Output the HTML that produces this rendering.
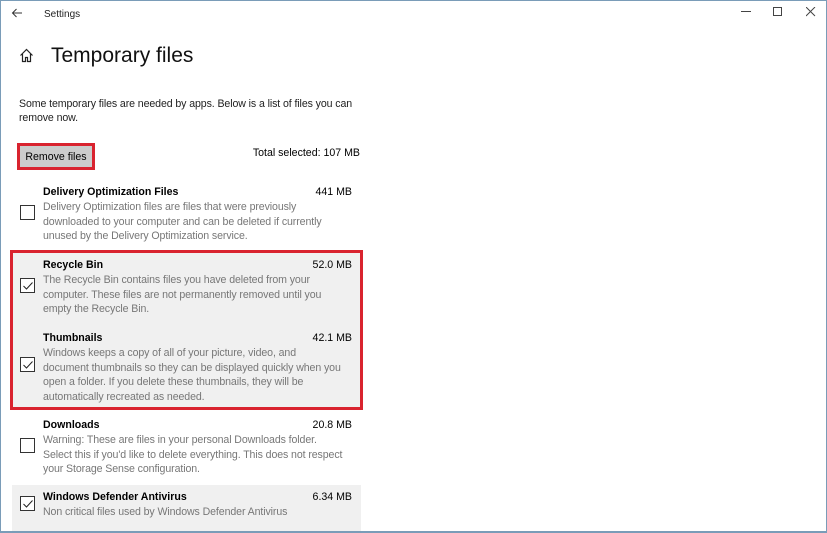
<!DOCTYPE html>
<html><head><meta charset="utf-8">
<style>
*{margin:0;padding:0;box-sizing:border-box}
html,body{width:827px;height:533px;overflow:hidden;background:#fff;font-family:"Liberation Sans",sans-serif;color:#000}
.frame{position:absolute;left:0;top:0;width:827px;height:533px;border:1px solid #7a9cb8;border-bottom-width:2px}
.a{position:absolute;white-space:nowrap}
.t{font-size:10.6px;font-weight:bold}
.s{font-size:10.6px;text-align:right}
.d{font-size:10.6px;color:#777;line-height:14.5px;white-space:nowrap;letter-spacing:-0.1px}
.cb{position:absolute;left:20px;width:15px;height:15px;border:1.5px solid #333;background:#fff}
.bg{position:absolute;background:#f0f0f0}
</style></head><body>
<div class="frame"></div>
<svg class="a" style="left:11px;top:8px" width="12" height="10" viewBox="0 0 12 10"><path d="M11 5H1.5M5.5 1L1.5 5l4 4" fill="none" stroke="#333" stroke-width="1"/></svg>
<div class="a" style="left:44px;top:9px;font-size:10px;color:#222">Settings</div>
<svg class="a" style="left:741px;top:11px" width="10" height="2"><path d="M0 .5H10" stroke="#444"/></svg>
<svg class="a" style="left:773px;top:7px" width="10" height="10"><rect x=".5" y=".5" width="8" height="8" fill="none" stroke="#444"/></svg>
<svg class="a" style="left:806px;top:7px" width="10" height="10"><path d="M0 0L9 9M9 0L0 9" stroke="#444"/></svg>
<svg class="a" style="left:19px;top:48px" width="15" height="15" viewBox="0 0 15 15"><path d="M1.5 7.5L7.5 1.5l6 6M3.5 6v7.5h3v-4h2v4h3V6" fill="none" stroke="#222" stroke-width="1.2"/></svg>
<div class="a" style="left:51px;top:44px;font-size:21px;color:#111">Temporary files</div>
<div class="a" style="left:19px;top:97px;font-size:10.6px;line-height:14px;color:#222;letter-spacing:-0.1px">Some temporary files are needed by apps. Below is a list of files you can<br>remove now.</div>
<div class="a" style="left:17px;top:143px;width:78px;height:27px;border:3px solid #d9232f;background:#ccc;font-size:10.6px;text-align:center;line-height:23px">Remove files</div>
<div class="a" style="left:200px;top:147px;width:160px;font-size:10.6px;text-align:right">Total selected: 107 MB</div>

<div class="a t" style="left:43px;top:186px">Delivery Optimization Files</div>
<div class="a s" style="left:290px;top:186px;width:62px">441 MB</div>
<div class="cb" style="top:205px"></div>
<div class="a d" style="left:43px;top:200px">Delivery Optimization files are files that were previously<br>downloaded to your computer and can be deleted if currently<br>unused by the Delivery Optimization service.</div>

<div class="bg" style="left:10px;top:250px;width:353px;height:160px;border:3px solid #d9232f"></div>
<div class="a t" style="left:43px;top:259px">Recycle Bin</div>
<div class="a s" style="left:290px;top:259px;width:62px">52.0 MB</div>
<div class="cb" style="top:278px"></div>
<svg class="a" style="left:23px;top:282px" width="10" height="8"><path d="M.5 4l3 3 6-6.5" fill="none" stroke="#222" stroke-width="1"/></svg>
<div class="a d" style="left:43px;top:273px">The Recycle Bin contains files you have deleted from your<br>computer. These files are not permanently removed until you<br>empty the Recycle Bin.</div>

<div class="a t" style="left:43px;top:332px">Thumbnails</div>
<div class="a s" style="left:290px;top:332px;width:62px">42.1 MB</div>
<div class="cb" style="top:357px"></div>
<svg class="a" style="left:23px;top:361px" width="10" height="8"><path d="M.5 4l3 3 6-6.5" fill="none" stroke="#222" stroke-width="1"/></svg>
<div class="a d" style="left:43px;top:346px">Windows keeps a copy of all of your picture, video, and<br>document thumbnails so they can be displayed quickly when you<br>open a folder. If you delete these thumbnails, they will be<br>automatically recreated as needed.</div>

<div class="a t" style="left:43px;top:419px">Downloads</div>
<div class="a s" style="left:290px;top:419px;width:62px">20.8 MB</div>
<div class="cb" style="top:438px"></div>
<div class="a d" style="left:43px;top:433px">Warning: These are files in your personal Downloads folder.<br>Select this if you'd like to delete everything. This does not respect<br>your Storage Sense configuration.</div>

<div class="bg" style="left:12px;top:485px;width:349px;height:46px"></div>
<div class="a t" style="left:43px;top:491px">Windows Defender Antivirus</div>
<div class="a s" style="left:290px;top:491px;width:62px">6.34 MB</div>
<div class="cb" style="top:496px"></div>
<svg class="a" style="left:23px;top:500px" width="10" height="8"><path d="M.5 4l3 3 6-6.5" fill="none" stroke="#222" stroke-width="1"/></svg>
<div class="a d" style="left:43px;top:505px">Non critical files used by Windows Defender Antivirus</div>
</body></html>
